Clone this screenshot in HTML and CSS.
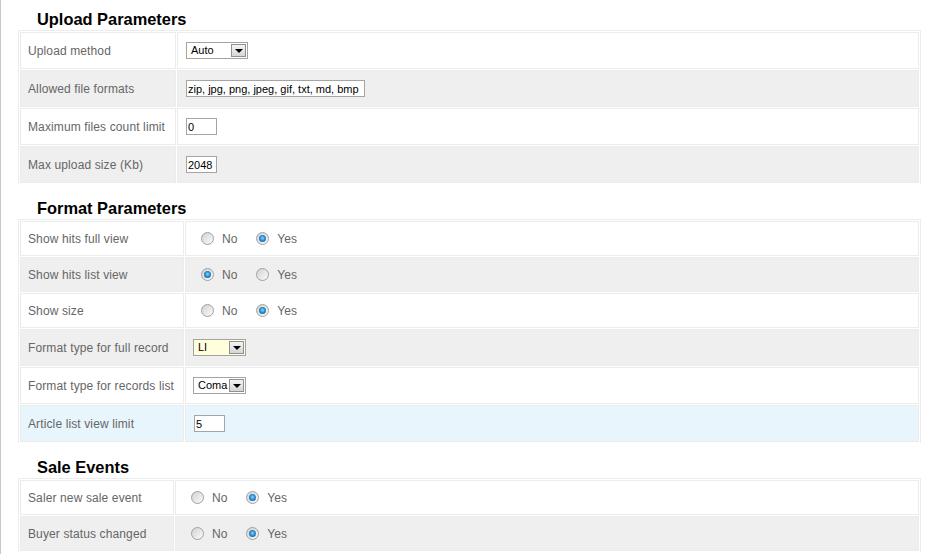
FILE: index.html
```html
<!DOCTYPE html>
<html lang="en">
<head>
<meta charset="utf-8">
<title>Parameters</title>
<link rel="stylesheet" href="styles.css">
</head>
<body>
<div class="page">

  <h2 class="group-title">Upload Parameters</h2>
  <table class="params">
    <tr>
      <td class="key key-upload">Upload method</td>
      <td class="val"><div class="cell">
        <span class="select w-auto"><span class="sel-text">Auto</span><span class="sel-btn"><span class="tri"></span></span></span>
      </div></td>
    </tr>
    <tr class="alt">
      <td class="key key-upload">Allowed file formats</td>
      <td class="val"><div class="cell"><input class="txt txt-wide" type="text" value="zip, jpg, png, jpeg, gif, txt, md, bmp"></div></td>
    </tr>
    <tr>
      <td class="key key-upload">Maximum files count limit</td>
      <td class="val"><div class="cell"><input class="txt txt-small" type="text" value="0"></div></td>
    </tr>
    <tr class="alt">
      <td class="key key-upload">Max upload size (Kb)</td>
      <td class="val"><div class="cell"><input class="txt txt-small" type="text" value="2048"></div></td>
    </tr>
  </table>

  <h2 class="group-title">Format Parameters</h2>
  <table class="params">
    <tr>
      <td class="key key-format">Show hits full view</td>
      <td class="val"><div class="cell cell-radio">
        <span class="opt"><span class="radio"></span>No</span>
        <span class="opt"><span class="radio on"></span>Yes</span>
      </div></td>
    </tr>
    <tr class="alt">
      <td class="key key-format">Show hits list view</td>
      <td class="val"><div class="cell cell-radio">
        <span class="opt"><span class="radio on"></span>No</span>
        <span class="opt"><span class="radio"></span>Yes</span>
      </div></td>
    </tr>
    <tr>
      <td class="key key-format">Show size</td>
      <td class="val"><div class="cell cell-radio">
        <span class="opt"><span class="radio"></span>No</span>
        <span class="opt"><span class="radio on"></span>Yes</span>
      </div></td>
    </tr>
    <tr class="alt">
      <td class="key key-format">Format type for full record</td>
      <td class="val"><div class="cell">
        <span class="select w-short hl"><span class="sel-text">LI</span><span class="sel-btn"><span class="tri"></span></span></span>
      </div></td>
    </tr>
    <tr>
      <td class="key key-format">Format type for records list</td>
      <td class="val"><div class="cell">
        <span class="select w-short"><span class="sel-text">Coma</span><span class="sel-btn"><span class="tri"></span></span></span>
      </div></td>
    </tr>
    <tr class="focus">
      <td class="key key-format">Article list view limit</td>
      <td class="val"><div class="cell"><input class="txt txt-small" type="text" value="5"></div></td>
    </tr>
  </table>

  <h2 class="group-title">Sale Events</h2>
  <table class="params">
    <tr>
      <td class="key key-sale">Saler new sale event</td>
      <td class="val"><div class="cell cell-radio">
        <span class="opt"><span class="radio"></span>No</span>
        <span class="opt"><span class="radio on"></span>Yes</span>
      </div></td>
    </tr>
    <tr class="alt">
      <td class="key key-sale">Buyer status changed</td>
      <td class="val"><div class="cell cell-radio">
        <span class="opt"><span class="radio"></span>No</span>
        <span class="opt"><span class="radio on"></span>Yes</span>
      </div></td>
    </tr>
  </table>

</div>
</body>
</html>
```

FILE: styles.css
```css
html, body {
  margin: 0;
  padding: 0;
  background: #fff;
}

body {
  font-family: "Liberation Sans", Arial, sans-serif;
  font-size: 12px;
  color: #666;
}

.page {
  border-left: 1px solid #c8c8c8;
  min-height: 554px;
  box-sizing: border-box;
  padding: 10px 0 0 17px;
}

.group-title {
  margin: 15px 0 2px 0;
  padding-left: 19px;
  font-size: 16.4px;
  line-height: 18px;
  font-weight: bold;
  color: #000;
}

.group-title:first-child {
  margin-top: 0;
}

.params {
  width: 903px;
  box-sizing: border-box;
  border-collapse: separate;
  border-spacing: 1px;
  border: 1px solid #ececec;
  border-bottom: 0;
}

.params td {
  border: 1px solid #ececec;
  padding: 0 7px;
  vertical-align: middle;
  background: #fff;
}

.params tr.alt td {
  background: #efefef;
}

.params tr.focus td {
  background: #e8f5fd;
}

.key {
  box-sizing: border-box;
  white-space: nowrap;
  letter-spacing: 0.12px;
}

.key-upload { width: 156px; }
.key-format { width: 164px; }
.key-sale { width: 154px; }

.cell {
  display: flex;
  align-items: center;
  height: 35px;
}

.cell-radio {
  height: 33px;
}

/* select boxes */
.select {
  display: inline-flex;
  align-items: center;
  box-sizing: border-box;
  height: 17px;
  border: 1px solid #a3a3a3;
  background: #fff;
  font-size: 11px;
  color: #000;
  margin-left: 1px;
}

.select.hl {
  background: #ffffdc;
}

.w-auto { width: 62px; }
.w-short { width: 53px; margin-left: 0; }

.sel-text {
  flex: 1;
  padding-left: 4px;
  line-height: 15px;
}

.sel-btn {
  display: flex;
  align-items: center;
  justify-content: center;
  box-sizing: border-box;
  width: 15px;
  height: 13px;
  margin-right: 1px;
  border: 1px solid #8f8f8f;
  background: linear-gradient(#f4f4f4, #d6d6d6);
}

.tri {
  width: 0;
  height: 0;
  border-left: 4px solid transparent;
  border-right: 4px solid transparent;
  border-top: 4px solid #000;
  margin-top: 1px;
}

/* text inputs */
.txt {
  box-sizing: border-box;
  height: 17px;
  margin: 0 0 0 1px;
  padding: 0 1px;
  border: 1px solid #a5a5a5;
  background: #fff;
  font-family: "Liberation Sans", Arial, sans-serif;
  font-size: 11px;
  color: #000;
  outline: none;
}

.txt-wide { width: 179px; }
.txt-small { width: 31px; }

/* radios */
.opt {
  display: inline-flex;
  align-items: center;
  gap: 8px;
  margin-left: 19px;
  color: #666;
}

.opt:first-child {
  margin-left: 8px;
}

.radio {
  display: inline-flex;
  align-items: center;
  justify-content: center;
  box-sizing: border-box;
  width: 13px;
  height: 13px;
  border-radius: 50%;
  border: 1px solid #a0a0a0;
  background: linear-gradient(135deg, #d2d2d2, #fbfbfb);
}

.radio.on::after {
  content: "";
  width: 7px;
  height: 7px;
  border-radius: 50%;
  background: radial-gradient(circle at 50% 45%, #8fd6ff 0, #2d8fd4 45%, #0e4a7a 100%);
}
```
